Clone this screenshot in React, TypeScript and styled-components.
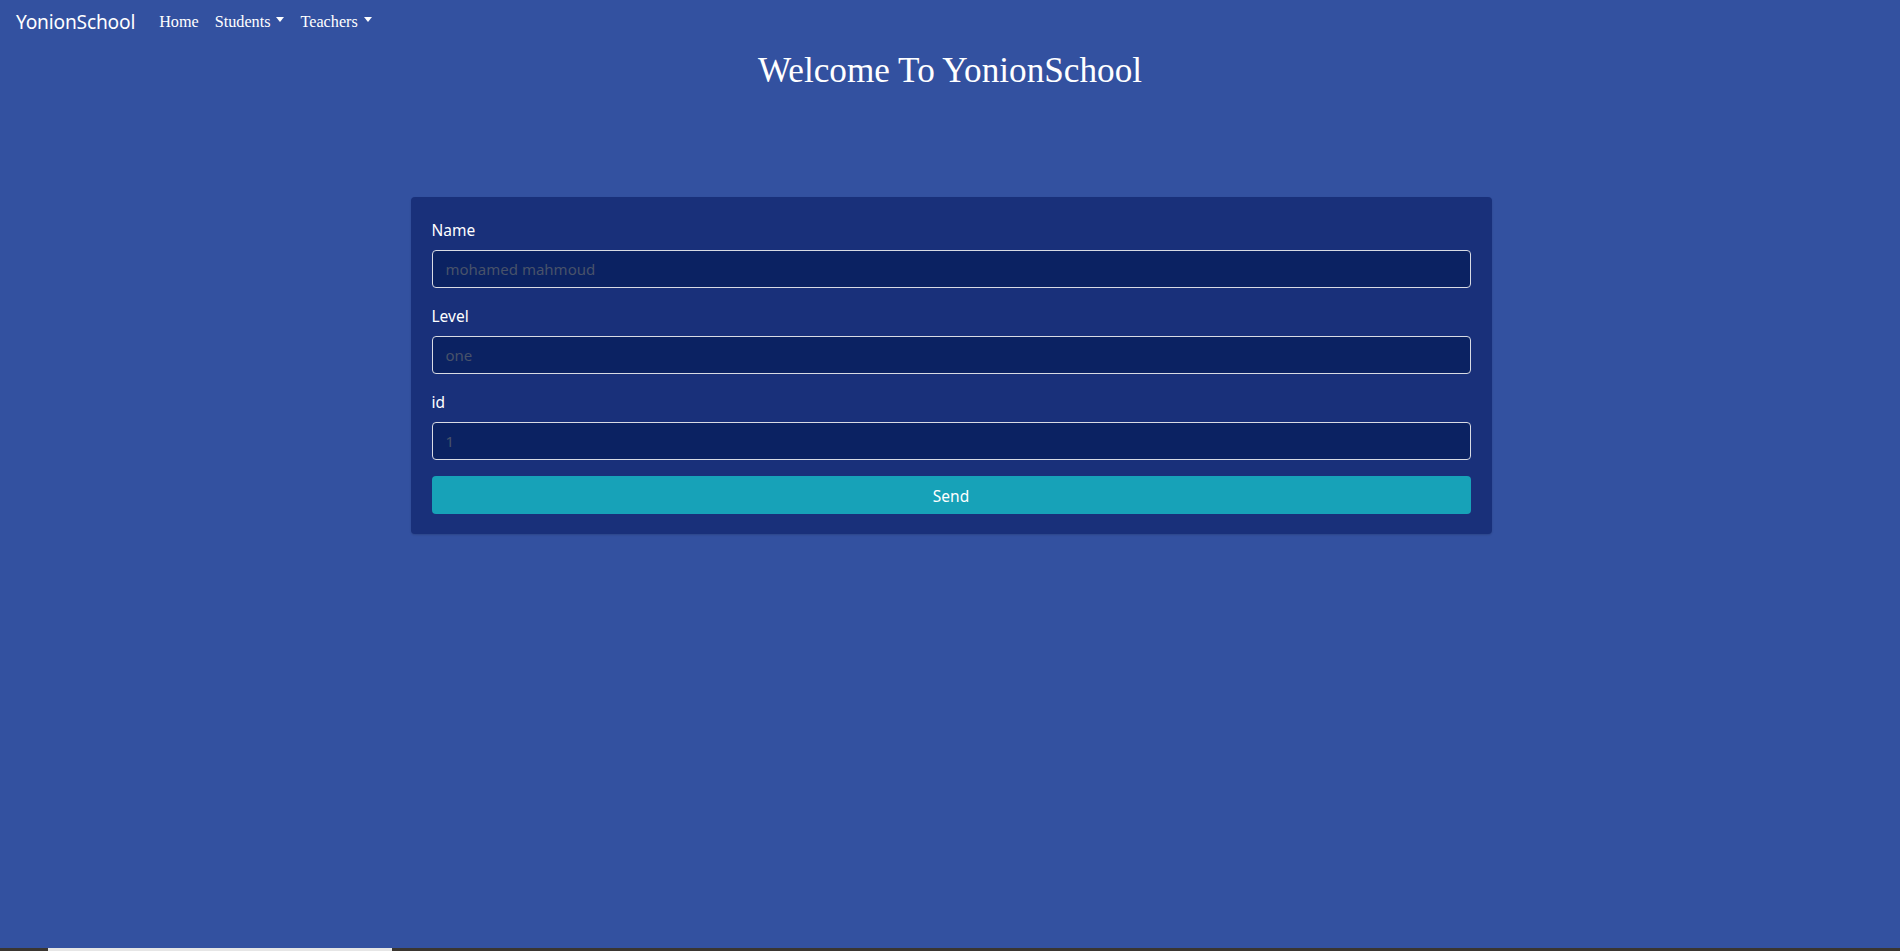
import React from "react";
import styled, { createGlobalStyle } from "styled-components";

const Global = createGlobalStyle`
  html, body { margin: 0; padding: 0; }
  body {
    background: #3351a0;
    min-height: 100vh;
    font-family: "Liberation Serif", "Times New Roman", serif;
    color: #fff;
    overflow: hidden;
  }
  * { box-sizing: border-box; }
`;

const Page = styled.div`
  min-height: 100vh;
  display: flex;
  flex-direction: column;
`;

const Navbar = styled.nav`
  display: flex;
  align-items: center;
  padding: 3px 16px 0;
  height: 40px;
`;

const Brand = styled.a`
  font-family: "Noto Sans", "Open Sans", sans-serif;
  font-size: 19.2px;
  line-height: 30px;
  color: #fff;
  margin-right: 16px;
  letter-spacing: -0.2px;
  text-decoration: none;
`;

const NavList = styled.ul`
  display: flex;
  list-style: none;
  margin: 0;
  padding: 0;
`;

const NavLink = styled.a<{ $dropdown?: boolean }>`
  display: flex;
  align-items: center;
  padding: 0 8px;
  font-family: "Liberation Serif", "Times New Roman", serif;
  font-size: 16.2px;
  line-height: 24px;
  color: #fff;
  text-decoration: none;
  &::after {
    content: ${(p) => (p.$dropdown ? '""' : "none")};
    display: inline-block;
    margin-left: 6px;
    margin-top: -4px;
    border-top: 5px solid #fff;
    border-left: 4px solid transparent;
    border-right: 4px solid transparent;
  }
`;

const Title = styled.h1`
  margin: 8px 0 0;
  text-align: center;
  font-family: "Liberation Serif", "Times New Roman", serif;
  font-weight: 400;
  font-size: 35.2px;
  line-height: 46px;
`;

const Card = styled.form`
  width: 1081px;
  margin: 103px auto 0;
  transform: translateX(1px);
  background: #19307a;
  border-radius: 4px;
  padding: 21px 21px 20px;
  display: flex;
  flex-direction: column;
  box-shadow: 0 1px 2px rgba(0, 0, 0, 0.15);
`;

const Group = styled.div`
  display: flex;
  flex-direction: column;
  margin-bottom: 16px;
`;

const Label = styled.label`
  font-family: "Noto Sans", "Open Sans", sans-serif;
  font-size: 15.5px;
  line-height: 24px;
  margin-bottom: 8px;
  color: #fff;
`;

const Input = styled.input`
  height: 38px;
  width: 100%;
  background: #0b2262;
  border: 1px solid #d8dbe4;
  border-radius: 4px;
  padding: 0 13px;
  font-family: "Noto Sans", "Open Sans", sans-serif;
  font-size: 15px;
  color: #fff;
  outline: none;
  &::placeholder {
    color: #48526a;
  }
`;

const Button = styled.button`
  height: 38px;
  width: 100%;
  background: #17a2b8;
  border: none;
  border-radius: 4px;
  color: #fff;
  font-family: "Noto Sans", "Open Sans", sans-serif;
  font-size: 15.5px;
  padding-top: 2px;
  cursor: pointer;
`;

const Scrollbar = styled.div`
  position: fixed;
  left: 0;
  right: 0;
  bottom: 0;
  height: 3px;
  background: #3a3631;
`;

const Thumb = styled.div`
  position: absolute;
  top: 0;
  bottom: 0;
  left: 48px;
  width: 344px;
  background: #e6e6e6;
`;

export default function App() {
  return (
    <Page>
      <Global />
      <Navbar>
        <Brand href="#">YonionSchool</Brand>
        <NavList>
          <li>
            <NavLink href="#">Home</NavLink>
          </li>
          <li>
            <NavLink href="#" $dropdown>
              Students
            </NavLink>
          </li>
          <li>
            <NavLink href="#" $dropdown>
              Teachers
            </NavLink>
          </li>
        </NavList>
      </Navbar>
      <Title>Welcome To YonionSchool</Title>
      <Card onSubmit={(e) => e.preventDefault()}>
        <Group>
          <Label>Name</Label>
          <Input placeholder="mohamed mahmoud" />
        </Group>
        <Group>
          <Label>Level</Label>
          <Input placeholder="one" />
        </Group>
        <Group>
          <Label>id</Label>
          <Input placeholder="1" />
        </Group>
        <Button type="submit">Send</Button>
      </Card>
      <Scrollbar>
        <Thumb />
      </Scrollbar>
    </Page>
  );
}
